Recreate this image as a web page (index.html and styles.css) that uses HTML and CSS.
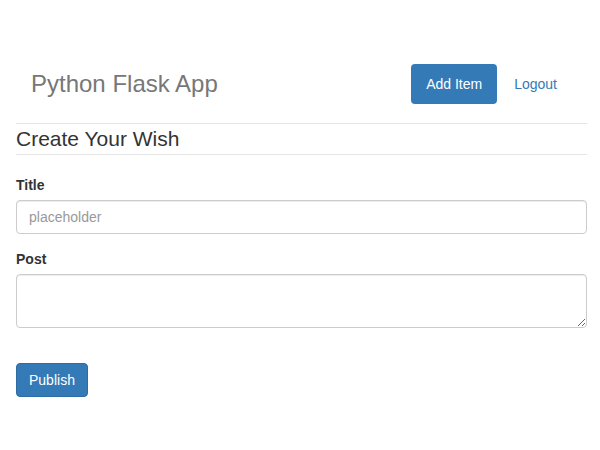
FILE: index.html
```html
<!DOCTYPE html>
<html>
<head>
<meta charset="utf-8">
<title>Python Flask App</title>
<link rel="stylesheet" href="styles.css">
</head>
<body>
<div class="container">
  <div class="header">
    <h3 class="brand">Python Flask App</h3>
    <nav class="nav">
      <a class="pill active" href="#">Add Item</a>
      <a class="pill" href="#">Logout</a>
    </nav>
  </div>
  <form class="wish-form">
    <fieldset>
      <legend>Create Your Wish</legend>
      <div class="form-group">
        <label for="title">Title</label>
        <input id="title" type="text" class="form-control" placeholder="placeholder">
      </div>
      <div class="form-group">
        <label for="post">Post</label>
        <textarea id="post" class="form-control" rows="2"></textarea>
      </div>
      <div class="actions">
        <button type="button" class="btn">Publish</button>
      </div>
    </fieldset>
  </form>
</div>
</body>
</html>
```
FILE: styles.css
```css
* { box-sizing: border-box; }
html, body { margin: 0; padding: 0; background: #fff; }
body {
  font-family: "Liberation Sans", Arial, sans-serif;
  font-size: 14px;
  line-height: 20px;
  color: #333;
  padding-top: 64px;
}
.container {
  padding: 0 13px 0 16px;
}
.header {
  display: flex;
  align-items: flex-start;
  justify-content: space-between;
  padding: 0 15px 19px;
  border-bottom: 1px solid #e5e5e5;
}
.brand {
  margin: 0;
  font-size: 24px;
  font-weight: 400;
  line-height: 40px;
  color: #777;
}
.nav {
  display: flex;
  gap: 2px;
}
.pill {
  display: block;
  padding: 10px 15px;
  line-height: 20px;
  border-radius: 4px;
  color: #337ab7;
  text-decoration: none;
}
.pill.active {
  background: #337ab7;
  color: #fff;
}
.wish-form fieldset {
  margin: 0;
  padding: 0;
  border: 0;
  min-width: 0;
}
legend {
  display: block;
  width: 100%;
  padding: 0;
  margin-bottom: 20px;
  font-size: 21px;
  line-height: 30px;
  color: #333;
  border-bottom: 1px solid #e5e5e5;
}
.form-group {
  margin-bottom: 15px;
}
label {
  display: block;
  margin-bottom: 5px;
  font-weight: 700;
}
.form-control {
  display: block;
  width: 100%;
  height: 34px;
  padding: 6px 12px;
  font-family: inherit;
  font-size: 14px;
  line-height: 20px;
  color: #555;
  background: #fff;
  border: 1px solid #ccc;
  border-radius: 4px;
  box-shadow: inset 0 1px 1px rgba(0,0,0,.075);
  margin: 0;
}
.form-control::placeholder { color: #999; }
textarea.form-control {
  height: 54px;
  resize: vertical;
}
.actions {
  padding-top: 20px;
}
.btn {
  display: inline-block;
  padding: 6px 12px;
  font-family: inherit;
  font-size: 14px;
  line-height: 20px;
  color: #fff;
  background: #337ab7;
  border: 1px solid #2e6da4;
  border-radius: 4px;
  cursor: pointer;
}
```
